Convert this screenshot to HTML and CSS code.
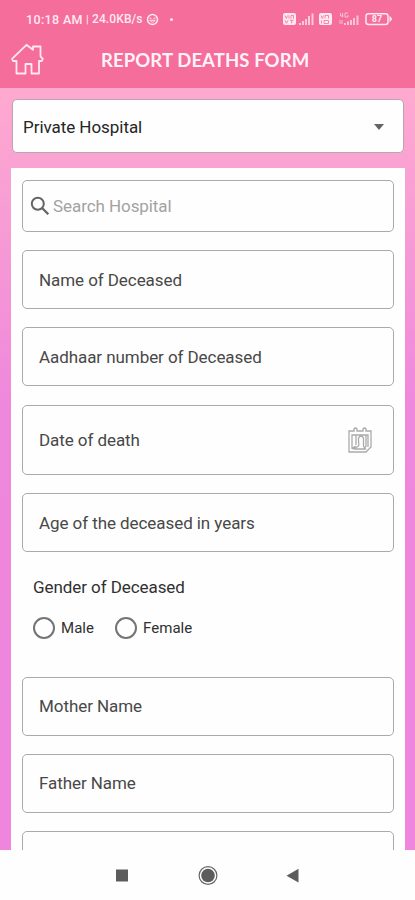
FILE: index.html
```html
<!DOCTYPE html>
<html lang="en">
<head>
<meta charset="utf-8">
<title>Report Deaths Form</title>
<link rel="stylesheet" href="styles.css">
</head>
<body>
<div class="app">
  <header class="header">
    <div class="status">
      <span class="time">10:18 AM</span><span class="bar">|</span><span class="speed">24.0KB/s</span>
      <svg class="face" width="13" height="13" viewBox="0 0 13 13" fill="none" stroke="currentColor"><circle cx="6.5" cy="6.5" r="5" stroke-width="1.5"/><path d="M3.5 5.2h2M7.5 5.2h2M3.8 7.2c.8 2.5 4.6 2.5 5.4 0z" stroke-width="1"/></svg>
      <span class="dot"></span>
      <svg class="signals" width="112" height="16" viewBox="0 0 112 16" fill="currentColor">
        <rect x="1" y="2" width="13" height="12" rx="2"/>
        <path d="M3 4.5l1.3 3 1.3-3M7 4.3v3.4M9 7.7V4.4h2.5v3.3M3 9.3l1.5 3 1.5-3M8 9.3h3.5M9.7 9.3v3" fill="none" stroke="#f46d9b" stroke-width=".8"/>
        <path d="M17 12h2v2h-2zM20 10h2v4h-2zM23 8h2v6h-2zM26 5h2v9h-2zM29.5 2.5h2v11.500h-2z" opacity=".75"/>
        <rect x="37" y="2" width="13" height="12" rx="2"/>
        <path d="M39 4.5l1.3 3 1.3-3M43 7.5V4.5h3.500v3M39.500 9.500v3M42 9.500h4.500v3H42z" fill="none" stroke="#f46d9b" stroke-width=".8"/>
        <path d="M58.500 2v3h3M60.500 2v4M66 2h-3v4h3V4M58 9v4M60 13V9" fill="none" stroke="currentColor" opacity=".65"/>
        <path d="M62 12h2v2h-2zM65 10.500h2v3.500h-2zM68 9h2v5h-2zM71 7h2v7h-2zM74.500 4.500h2v9.500h-2z" opacity=".7"/>
        <rect x="84" y="2.800" width="22" height="10.600" rx="2.500" fill="none" stroke="currentColor" stroke-width="1.500"/>
        <path d="M107.500 4.500l2.800 3.500-2.800 3.500z"/>
        <text x="95" y="11" text-anchor="middle" class="battery">87</text>
      </svg>
    </div>
    <div class="titlebar">
      <svg class="home" width="34" height="32" viewBox="0 0 34 32" fill="none" stroke="currentColor" stroke-width="1.800" stroke-linejoin="round"><path d="M2 15.800L16.500 1.800l6.500 5V3.500h7.500v9.800l2.300 2.500-1 2.200H29v12.500h-7.500V21h-6v9.500H6.500V18H3z"/></svg>
      <h1>REPORT DEATHS FORM</h1>
    </div>
  </header>
  <main class="main">
    <div class="select"><span>Private Hospital</span><span class="arrow"></span></div>
    <section class="panel">
      <div class="field search">
        <svg width="20" height="20" viewBox="0 0 20 20" fill="none" stroke="#646464"><circle cx="7.800" cy="7.800" r="6" stroke-width="2"/><path d="M12.300 12.300l6 6" stroke-width="2.300"/></svg>
        <span>Search Hospital</span>
      </div>
      <div class="field"><span>Name of Deceased</span></div>
      <div class="field"><span>Aadhaar number of Deceased</span></div>
      <div class="field date"><span>Date of death</span>
        <svg width="24" height="26" viewBox="0 0 24 26" fill="none" stroke="#aaa" stroke-width="1.300"><path d="M1 4h5V2q1.500-2 3 0v2h6V2q1.500-2 3 0v2h5v16l-5 5H1zM4 22V8h16v12M4 22l3.500-3M8 18V8M5.500 22l5-3c1-1 0-3 0-5v-3q2.500-4 5 0v8l2 3H5.500M18 8v11l-2 3"/></svg>
      </div>
      <div class="field age"><span>Age of the deceased in years</span></div>
      <div class="gender">
        <span>Gender of Deceased</span>
        <div class="options">
          <span class="radio"></span><span class="male">Male</span>
          <span class="radio"></span><span class="female">Female</span>
        </div>
      </div>
      <div class="field"><span>Mother Name</span></div>
      <div class="field"><span>Father Name</span></div>
      <div class="field"></div>
    </section>
  </main>
  <nav class="nav">
    <svg width="415" height="50" viewBox="0 0 415 50" fill="#5c5c5c"><rect x="116" y="19.500" width="12" height="12"/><circle cx="208" cy="25.500" r="6.800"/><circle cx="208" cy="25.500" r="8.900" fill="none" stroke="#666" stroke-width="1.200"/><path d="M298.500 18.800v13.800l-12-6.900z"/></svg>
  </nav>
</div>
</body>
</html>
```
FILE: styles.css
```css
* { box-sizing: border-box; }
body { margin: 0; font-family: Roboto, "Liberation Sans", sans-serif; background: #fefefe; }
.app { width: 415px; height: 900px; overflow: hidden; display: flex; flex-direction: column; }
.header { height: 88px; flex: none; background: #f46d9b; color: #ffe8f1; }
.status { height: 38px; padding: 0 21px 0 26px; display: flex; align-items: center; font-size: 12.5px; font-weight: 500; white-space: nowrap; }
.time { width: 60px; letter-spacing: .35px; }
.bar { width: 6px; font-size: 11px; }
.speed { width: 54px; font-size: 12px; letter-spacing: .1px; }
.face { flex: none; }
.dot { width: 3px; height: 3px; margin-left: 11px; border-radius: 50%; background: currentColor; }
.signals { margin-left: auto; }
.battery { font-size: 9px; font-weight: 700; }
.titlebar { height: 50px; padding: 5px 0 0 10px; display: flex; align-items: flex-start; }
.home { flex: none; }
h1 { margin: 6px 0 0 57px; font: 700 18.5px/22px Lato, sans-serif; letter-spacing: .1px; white-space: nowrap; color: #fff2f7; }
.main { height: 762px; flex: none; padding: 11px 10px 0 11px; overflow: hidden; background: linear-gradient(#ffa9d0 0, #f9a1d3 90px, #ef87dc 320px, #ef85dd 100%); }
.select { height: 54px; margin: 0 1px 15px; padding: 1px 19px 0 10px; border: 1px solid #b9a5b0; border-radius: 5px; display: flex; align-items: center; justify-content: space-between; background: #fefefe; color: #252525; font-size: 17px; letter-spacing: -.05px; }
.arrow { border: 5px solid transparent; border-top: 6px solid #646464; border-bottom: 0; }
.panel { height: 700px; padding: 12px 11px 0; background: #fefefe; display: flex; flex-direction: column; font-size: 17px; letter-spacing: -.07px; color: #484848; }
.field { height: 59px; flex: none; margin-bottom: 18.4px; padding: 0 16px; border: 1px solid #aaa; border-radius: 5px; display: flex; align-items: center; white-space: nowrap; }
.search { height: 52px; margin-bottom: 18px; padding: 0 7px; gap: 3px; color: #a2a2a2; }
.date { height: 70px; padding-right: 21px; justify-content: space-between; }
.age { margin-bottom: 0; }
.gender { height: 124.4px; flex: none; padding: 22.4px 11px 0; color: #303030; }
.gender > span { display: block; line-height: 24px; }
.options { display: flex; align-items: center; margin-top: 18px; font-size: 15px; line-height: 22px; letter-spacing: .05px; }
.radio { width: 22px; height: 22px; margin-right: 6px; border: 2px solid #747474; border-radius: 50%; }
.male { width: 54px; }
```
